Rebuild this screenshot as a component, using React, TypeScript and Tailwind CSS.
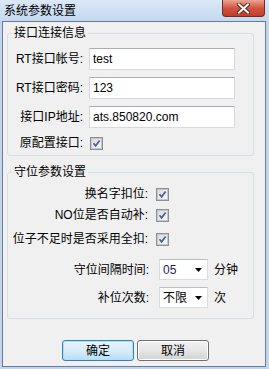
import React from 'react';

const font = "font-['Liberation_Sans','Noto_Sans_CJK_SC',sans-serif]";

const CheckBox = () => (
  <div className="w-[13px] h-[13px] border border-[#8e8f8f] bg-[#f4f4f4] flex items-center justify-center shrink-0">
    <div className="relative w-[11px] h-[11px] border border-[#c4c8cc] bg-linear-to-br from-[#d9dcdf] to-[#f7f7f7]">
      <svg className="absolute left-0 top-0" width="9" height="9" viewBox="0 0 9 9">
        <path d="M1.5 4.3 L3.6 6.8 L7.6 1.4" fill="none" stroke="#4a5f94" strokeWidth="1.7" />
      </svg>
    </div>
  </div>
);

const TextBox = ({ value }: { value: string }) => (
  <div className="w-[146px] h-[22px] bg-white border border-[#d6d9de] border-t-[#abadb3] flex items-center pl-[3px] text-[12px] text-black">
    {value}
  </div>
);

const Combo = ({ value, color = 'text-black' }: { value: string; color?: string }) => (
  <div className="w-[49px] h-[21px] bg-white border border-[#d9dce0] border-t-[#b9bcc2] flex items-center justify-between pl-[3px] pr-[5px]">
    <span className={`text-[12px] leading-[14px] ${color}`}>{value}</span>
    <svg width="7" height="4" viewBox="0 0 7 4">
      <path d="M0 0 H7 L3.5 4 Z" fill="#000" />
    </svg>
  </div>
);

const CheckRow = ({ label, className = '' }: { label: string; className?: string }) => (
  <div className={`flex items-center h-[13px] gap-[8px] ${className}`}>
    <span className="w-[140px] text-right text-[12px] leading-[13px] whitespace-nowrap">{label}</span>
    <CheckBox />
  </div>
);

export default function App() {
  return (
    <div className={`w-[269px] h-[369px] bg-[#c1d6ee] flex flex-col overflow-hidden ${font} text-black`}>
      {/* title bar */}
      <div className="h-[21px] flex items-start justify-between bg-linear-to-b from-[#dbe8f7] to-[#c3d8ef]">
        <span className="pl-[4px] pt-[4px] text-[12px] leading-[14px]">系统参数设置</span>
        <div className="mr-[4px] w-[43px] h-[17px] rounded-b-[4px] border border-t-0 border-[#6e2d26] bg-linear-to-b from-[#e8a596] via-[#d0543f] to-[#c23c2b] flex items-center justify-center">
          <svg width="13" height="11" viewBox="0 0 13 11">
            <path d="M2 1.5 L11 9.5 M11 1.5 L2 9.5" stroke="#5a2a24" strokeWidth="4" strokeLinecap="square" />
            <path d="M2 1.5 L11 9.5 M11 1.5 L2 9.5" stroke="#ffffff" strokeWidth="2" strokeLinecap="square" />
          </svg>
        </div>
      </div>

      {/* client area */}
      <div className="ml-[2px] w-[264px] h-[346px] bg-[#f0f0f0] border border-[#6a7d93] flex flex-col">
        <fieldset className="ml-[4px] mt-[4px] w-[247px] border border-[#d5dfe5] rounded-[3px] pb-[5px]">
          <legend className="ml-[4px] px-[2px] text-[12px] leading-[14px]">接口连接信息</legend>
          <div className="flex flex-col gap-[7px] pt-[8px]">
            <div className="flex items-center gap-[6px]">
              <span className="w-[75px] text-right text-[12px] whitespace-nowrap">RT接口帐号:</span>
              <TextBox value="test" />
            </div>
            <div className="flex items-center gap-[6px]">
              <span className="w-[75px] text-right text-[12px] whitespace-nowrap">RT接口密码:</span>
              <TextBox value="123" />
            </div>
            <div className="flex items-center gap-[6px]">
              <span className="w-[75px] text-right text-[12px] whitespace-nowrap">接口IP地址:</span>
              <TextBox value="ats.850820.com" />
            </div>
          </div>
          <div className="flex items-center gap-[6px] mt-[9px] h-[13px]">
            <span className="w-[75px] text-right text-[12px] leading-[13px] whitespace-nowrap">原配置接口:</span>
            <div className="ml-[1px]">
              <CheckBox />
            </div>
          </div>
        </fieldset>

        <fieldset className="ml-[4px] mt-[9px] w-[247px] border border-[#d5dfe5] rounded-[3px] pb-[10px]">
          <legend className="ml-[4px] px-[2px] text-[12px] leading-[14px]">守位参数设置</legend>
          <CheckRow label="换名字扣位:" className="mt-[9px]" />
          <CheckRow label="NO位是否自动补:" className="mt-[8px]" />
          <CheckRow label="位子不足时是否采用全扣:" className="mt-[11px]" />
          <div className="flex items-center gap-[10px] mt-[13px] h-[21px]">
            <span className="w-[141px] text-right text-[12px] whitespace-nowrap">守位间隔时间:</span>
            <div className="flex items-center gap-[6px]">
              <Combo value="05" color="text-[#1c1c5c]" />
              <span className="text-[12px]">分钟</span>
            </div>
          </div>
          <div className="flex items-center gap-[10px] mt-[7px] h-[21px]">
            <span className="w-[141px] text-right text-[12px] whitespace-nowrap">补位次数:</span>
            <div className="flex items-center gap-[6px]">
              <Combo value="不限" />
              <span className="text-[12px]">次</span>
            </div>
          </div>
        </fieldset>

        <div className="flex gap-[3px] pl-[59px] mt-[21px]">
          <button className="w-[72px] h-[21px] rounded-[3px] border border-[#3c7fb1] bg-linear-to-b from-[#e8f4fc] via-[#d8ecf9] to-[#b7def5] shadow-[inset_0_0_0_1px_#a9e3fb] text-[12px] leading-[14px]">
            确定
          </button>
          <button className="w-[72px] h-[21px] rounded-[3px] border border-[#707070] bg-linear-to-b from-[#f2f2f2] via-[#e6e6e6] to-[#d2d2d2] shadow-[inset_0_0_0_1px_#fcfcfc] text-[12px] leading-[14px]">
            取消
          </button>
        </div>
      </div>
    </div>
  );
}
